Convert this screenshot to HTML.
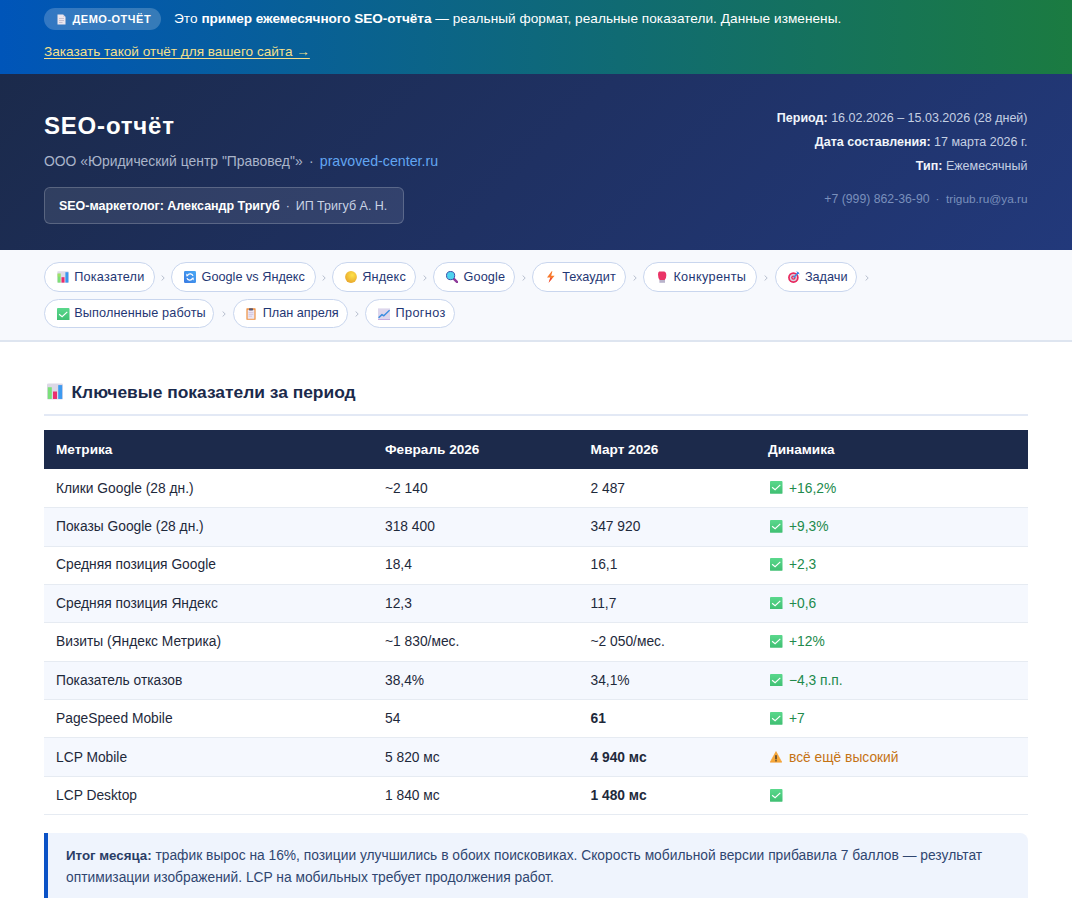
<!DOCTYPE html>
<html lang="ru">
<head>
<meta charset="utf-8">
<style>
*{box-sizing:border-box;margin:0;padding:0}
html,body{width:1072px;height:898px;overflow:hidden;background:#fff}
body{font-family:"Liberation Sans",sans-serif;color:#1e293b;position:relative}
.a{position:absolute;white-space:nowrap}
svg{display:block}
.banner{position:absolute;left:0;top:0;width:1072px;height:74px;background:linear-gradient(90deg,#0055b9 0%,#0e687c 50%,#1b7b41 100%);color:#fff}
.badge{position:absolute;left:44px;top:8px;height:22px;width:117px;border-radius:11px;background:rgba(255,255,255,0.2)}
.badge .t{left:28.5px;top:0;font-size:11px;line-height:22px;font-weight:bold;letter-spacing:0.5px}
.bline{left:174px;top:9.5px;font-size:13.6px;line-height:18px;letter-spacing:0.05px}
.bline b{letter-spacing:-0.04px}
.blink{left:44px;top:42.9px;font-size:13.6px;line-height:18px;color:#f6e08c;text-decoration:underline;text-underline-offset:2px;text-decoration-skip-ink:none}
.header{position:absolute;left:0;top:74px;width:1072px;height:176px;background:linear-gradient(135deg,#1b2a4b 0%,#1f3163 50%,#22397b 100%);color:#fff}
.title{left:44px;top:36.8px;font-size:24px;line-height:30px;font-weight:bold;letter-spacing:0.8px}
.sub{left:44px;top:78.3px;font-size:13.9px;line-height:18px;color:#aab5ca}
.sub .lk{color:#62a6f2;font-size:14.2px}
.mbox{left:44px;top:113px;width:360px;height:37px;border:1px solid rgba(255,255,255,0.2);background:rgba(255,255,255,0.09);border-radius:6px}
.mbox .t{left:14px;top:9.6px;font-size:12.5px;line-height:16px;color:#c9d3e4}
.mbox b{color:#fff;letter-spacing:-0.03px}
.rinfo{right:44.5px;top:31.8px;text-align:right;font-size:12.5px;line-height:24.2px;color:#c5d0e3}
.rinfo b{color:#f1f5fb}
.contacts{right:44.5px;top:116.8px;font-size:11.8px;line-height:16px;color:#7a90bc}
.nav{position:absolute;left:0;top:250px;width:1072px;height:92px;background:#f7f9fd;border-bottom:2px solid #dee5f0}
.pill{position:absolute;height:29.5px;border:1px solid #c9d6ee;background:#fff;border-radius:15px}
.pill svg{position:absolute;left:12px;top:8px}
.pill .t{left:29.2px;top:5.8px;font-size:12.7px;line-height:16px;color:#1f3774}
.sep{position:absolute;width:4px;height:6px}
.stitle{left:71.5px;top:379.9px;font-size:17.4px;line-height:24px;font-weight:bold;color:#1b2a4b}
.sline{position:absolute;left:44px;top:413.5px;width:984px;height:2px;background:#e3e9f5}
.thead{position:absolute;left:44px;top:430px;width:984px;height:38.5px;background:#1c2a4b}
.th{top:11.8px;font-size:13.6px;line-height:16px;font-weight:bold;color:#fff}
.row{position:absolute;left:44px;width:984px;height:38.5px;border-bottom:1px solid #e6ebf2}
.row.alt{background:#f5f8fe}
.td{top:11.6px;font-size:13.8px;line-height:16px;color:#1e293b}
.row.nf .td{top:10.5px}
.c1{left:12px}.c2{left:341px}.c3{left:546.5px}.c4{left:724px}
.ok{color:#218a4c}
.warn{color:#c57314}
.chk{position:absolute;left:726px;top:13px}
.summary{position:absolute;left:44px;top:833px;width:984px;height:80px;background:#eff4fd;border-left:4px solid #0b52c6;border-radius:0 8px 8px 0}
.summary .t{left:18px;top:12.4px;font-size:13.8px;line-height:21.5px;color:#2f4670}
.summary b{color:#2a3d66;font-size:13.3px}
</style>
</head>
<body>
<div class="banner">
  <div class="badge">
    <svg class="a" style="left:12.5px;top:6px" width="9" height="11" viewBox="0 0 9 11"><path d="M0.5 0.5H6L8.5 3V10.5H0.5Z" fill="#ece6ee"/><path d="M6 0.5V3H8.5" fill="#d9d2de"/><path d="M2 4.5H7M2 6.5H7M2 8.5H5.5" stroke="#b8b0c4" stroke-width="0.7"/></svg>
    <div class="a t">ДЕМО-ОТЧЁТ</div>
  </div>
  <div class="a bline">Это <b>пример ежемесячного SEO-отчёта</b> — реальный формат, реальные показатели. Данные изменены.</div>
  <div class="a blink">Заказать такой отчёт для вашего сайта →</div>
</div>
<div class="header">
  <div class="a title">SEO-отчёт</div>
  <div class="a sub">ООО «Юридический центр "Правовед"»<span style="margin:0 6px 0 6.5px">·</span><span class="lk">pravoved-center.ru</span></div>
  <div class="a mbox"><div class="a t"><b>SEO-маркетолог: Александр Тригуб</b><span style="margin:0 5.8px 0 6px">·</span>ИП Тригуб А. Н.</div></div>
  <div class="a rinfo"><b>Период:</b> 16.02.2026 – 15.03.2026 (28 дней)<br><b>Дата составления:</b> 17 марта 2026 г.<br><b>Тип:</b> Ежемесячный</div>
  <div class="a contacts"><span style="font-size:12.25px">+7 (999) 862-36-90</span><span style="margin:0 6.5px 0 6px">·</span>trigub.ru@ya.ru</div>
</div>
<div class="nav">
<div class="pill" style="left:44px;top:12px;width:111.0px"><svg width="12" height="12" viewBox="0 0 12 12" style=""><rect x="0.3" y="0.3" width="11.4" height="11.4" rx="0.8" fill="#dedbe8"/><rect x="0.6" y="2.6" width="3" height="9" fill="#7ddf76"/><rect x="0.6" y="2.6" width="3" height="3" fill="#b8e35a" opacity=".6"/><rect x="4.5" y="6.2" width="3" height="5.4" fill="#ec2a6c"/><rect x="8.4" y="1.2" width="3" height="10.4" fill="#3b97ee"/></svg><div class="a t" style="letter-spacing:0.2px">Показатели</div></div>
<div class="pill" style="left:171.4px;top:12px;width:144.3px"><svg width="12" height="12" viewBox="0 0 12 12" style=""><defs><linearGradient id="sg" x1="1" y1="0" x2="0" y2="1"><stop offset="0" stop-color="#48aaf6"/><stop offset="1" stop-color="#3a7ae2"/></linearGradient></defs><rect x="0" y="0" width="12" height="12" rx="1.2" fill="url(#sg)"/><path d="M3.2 4.6Q4.6 2.6 6.6 2.9Q8.4 3.2 9 4.9" stroke="#fff" stroke-width="1.3" fill="none"/><path d="M2.2 2.6L4.6 4.9L2.4 5.4Z" fill="#fff"/><path d="M8.8 7.4Q7.4 9.4 5.4 9.1Q3.6 8.8 3 7.1" stroke="#fff" stroke-width="1.3" fill="none"/><path d="M9.8 9.4L7.4 7.1L9.6 6.6Z" fill="#fff"/></svg><div class="a t" style="letter-spacing:0px">Google vs Яндекс</div></div>
<div class="pill" style="left:332.1px;top:12px;width:83.5px"><svg width="12" height="12" viewBox="0 0 12 12" style=""><defs><radialGradient id="yg" cx="0.6" cy="0.35" r="0.7"><stop offset="0" stop-color="#fde24a"/><stop offset="1" stop-color="#e8a52a"/></radialGradient></defs><circle cx="6" cy="6" r="5.9" fill="url(#yg)"/></svg><div class="a t" style="letter-spacing:0.17px">Яндекс</div></div>
<div class="pill" style="left:433.2px;top:12px;width:81.7px"><svg width="12" height="12" viewBox="0 0 12 12" style=""><path d="M7.6 7.6L11.3 11.3" stroke="#8e3b9a" stroke-width="2.4" stroke-linecap="round"/><circle cx="4.6" cy="4.6" r="4.1" fill="#4fd3ee" stroke="#3b4fa8" stroke-width="1"/></svg><div class="a t" style="letter-spacing:0.17px">Google</div></div>
<div class="pill" style="left:532px;top:12px;width:94.4px"><svg width="12" height="12" viewBox="0 0 12 12" style=""><path d="M6.7 0.2L2 6.4H5.4L3.6 11.8L9.6 4.8H6.2L7.4 0.2Z" fill="#f7782a"/><path d="M5.4 6.4L3.6 11.8L7.2 7.6Z" fill="#ee3b3b" opacity=".8"/></svg><div class="a t" style="letter-spacing:0.05px">Техаудит</div></div>
<div class="pill" style="left:643.2px;top:12px;width:114.2px"><svg width="12" height="12" viewBox="0 0 12 12" style=""><path d="M3.2 0.4H8.2Q10.4 0.8 10.3 4.5Q10.3 8 8.6 9.2H3.8Q2 7.5 2 3.5Q2 0.6 3.2 0.4Z" fill="#ea3466"/><rect x="3.4" y="9" width="5.6" height="2.8" fill="#b9b3cb"/></svg><div class="a t" style="letter-spacing:0.35px">Конкуренты</div></div>
<div class="pill" style="left:774.7px;top:12px;width:82.6px"><svg width="12" height="12" viewBox="0 0 12 12" style=""><circle cx="5.4" cy="6.6" r="5.3" fill="#e8285e"/><circle cx="5.4" cy="6.6" r="3.6" fill="#d8d3e0"/><circle cx="5.4" cy="6.6" r="2.2" fill="#e8285e"/><circle cx="5.4" cy="6.6" r="0.9" fill="#d8d3e0"/><path d="M5.6 6.4L10 2" stroke="#2f8fe8" stroke-width="1.4"/><path d="M8.2 0.3L9.6 2.4L11.7 3.6L10.6 1.3Z" fill="#3a7ee8"/></svg><div class="a t" style="letter-spacing:0px">Задачи</div></div>
<div class="pill" style="left:44px;top:48.5px;width:170.4px"><svg width="12.5" height="12.8" viewBox="0 0 12.5 12.8" style=""><defs><linearGradient id="cg" x1="0" y1="0" x2="0" y2="1"><stop offset="0" stop-color="#5ad88c"/><stop offset="1" stop-color="#3fbf72"/></linearGradient></defs><rect x="0" y="0" width="12.5" height="12.8" rx="0.9" fill="url(#cg)"/><path d="M2.1 6.3L5.1 8.7L10.3 3.9" stroke="#fff" stroke-width="1.15" fill="none"/></svg><div class="a t" style="letter-spacing:0.12px">Выполненные работы</div></div>
<div class="pill" style="left:232.5px;top:48.5px;width:115.9px"><svg width="12" height="12" viewBox="0 0 12 12" style=""><rect x="0.4" y="0.2" width="9.2" height="11.6" rx="0.6" fill="#ef8f3e"/><rect x="1.6" y="1.8" width="6.8" height="9" fill="#ebe6f3"/><rect x="3" y="0.2" width="4" height="2.2" rx="0.6" fill="#5b5870"/><path d="M2.6 4.6H7.4M2.6 6.4H7.4M2.6 8.2H6" stroke="#c8b8d8" stroke-width="0.7"/></svg><div class="a t" style="letter-spacing:0px">План апреля</div></div>
<div class="pill" style="left:365.4px;top:48.5px;width:89.8px"><svg width="12" height="12" viewBox="0 0 12 12" style=""><rect x="0" y="0.4" width="12" height="11.2" fill="#ddd6ec"/><path d="M0 11.6H12" stroke="#b394d8" stroke-width="0.8"/><path d="M0.6 9.8L4 6.6L5.8 7.8L11.6 2.2" stroke="#3b8ee0" stroke-width="1.5" fill="none" stroke-linejoin="round"/></svg><div class="a t" style="letter-spacing:0.35px">Прогноз</div></div>
<svg class="sep" style="left:161px;top:24.5px" width="4" height="6" viewBox="0 0 4 6"><path d="M0.6 0.5L3.2 3L0.6 5.5" stroke="#b3bccb" stroke-width="0.95" fill="none"/></svg>
<svg class="sep" style="left:321.5px;top:24.5px" width="4" height="6" viewBox="0 0 4 6"><path d="M0.6 0.5L3.2 3L0.6 5.5" stroke="#b3bccb" stroke-width="0.95" fill="none"/></svg>
<svg class="sep" style="left:422.5px;top:24.5px" width="4" height="6" viewBox="0 0 4 6"><path d="M0.6 0.5L3.2 3L0.6 5.5" stroke="#b3bccb" stroke-width="0.95" fill="none"/></svg>
<svg class="sep" style="left:522px;top:24.5px" width="4" height="6" viewBox="0 0 4 6"><path d="M0.6 0.5L3.2 3L0.6 5.5" stroke="#b3bccb" stroke-width="0.95" fill="none"/></svg>
<svg class="sep" style="left:633px;top:24.5px" width="4" height="6" viewBox="0 0 4 6"><path d="M0.6 0.5L3.2 3L0.6 5.5" stroke="#b3bccb" stroke-width="0.95" fill="none"/></svg>
<svg class="sep" style="left:764px;top:24.5px" width="4" height="6" viewBox="0 0 4 6"><path d="M0.6 0.5L3.2 3L0.6 5.5" stroke="#b3bccb" stroke-width="0.95" fill="none"/></svg>
<svg class="sep" style="left:864.5px;top:24.5px" width="4" height="6" viewBox="0 0 4 6"><path d="M0.6 0.5L3.2 3L0.6 5.5" stroke="#b3bccb" stroke-width="0.95" fill="none"/></svg>
<svg class="sep" style="left:221.5px;top:61.0px" width="4" height="6" viewBox="0 0 4 6"><path d="M0.6 0.5L3.2 3L0.6 5.5" stroke="#b3bccb" stroke-width="0.95" fill="none"/></svg>
<svg class="sep" style="left:355px;top:61.0px" width="4" height="6" viewBox="0 0 4 6"><path d="M0.6 0.5L3.2 3L0.6 5.5" stroke="#b3bccb" stroke-width="0.95" fill="none"/></svg>
</div>
<svg class="a" style="left:47px;top:383px" width="16" height="17" viewBox="0 0 12 12"><rect x="0" y="0" width="12" height="12" rx="1" fill="#dcd8e6"/><rect x="0.6" y="2.8" width="3" height="8.8" fill="#7be07a"/><rect x="4.5" y="6" width="3" height="5.6" fill="#ea2f6e"/><rect x="8.4" y="1.2" width="3" height="10.4" fill="#3d9af0"/></svg>
<div class="a stitle">Ключевые показатели за период</div>
<div class="sline"></div>
<div class="thead">
  <div class="a th c1">Метрика</div><div class="a th c2">Февраль 2026</div><div class="a th c3">Март 2026</div><div class="a th c4">Динамика</div>
</div>
<div class="row" style="top:468.50px;height:39.70px"><div class="a td c1" style="top:12.00px">Клики Google (28 дн.)</div><div class="a td c2" style="top:12.00px">~2 140</div><div class="a td c3" style="top:12.00px">2 487</div><svg width="12.5" height="12.8" viewBox="0 0 12.5 12.8" style="position:absolute;left:726px;top:12.8px"><defs><linearGradient id="cg" x1="0" y1="0" x2="0" y2="1"><stop offset="0" stop-color="#5ad88c"/><stop offset="1" stop-color="#3fbf72"/></linearGradient></defs><rect x="0" y="0" width="12.5" height="12.8" rx="0.9" fill="url(#cg)"/><path d="M2.1 6.3L5.1 8.7L10.3 3.9" stroke="#fff" stroke-width="1.15" fill="none"/></svg><div class="a td ok" style="left:745px;top:12.00px">+16,2%</div></div>
<div class="row alt nf" style="top:508.20px;height:38.38px"><div class="a td c1" style="top:10.75px">Показы Google (28 дн.)</div><div class="a td c2" style="top:10.75px">318 400</div><div class="a td c3" style="top:10.75px">347 920</div><svg width="12.5" height="12.8" viewBox="0 0 12.5 12.8" style="position:absolute;left:726px;top:11.55px"><defs><linearGradient id="cg" x1="0" y1="0" x2="0" y2="1"><stop offset="0" stop-color="#5ad88c"/><stop offset="1" stop-color="#3fbf72"/></linearGradient></defs><rect x="0" y="0" width="12.5" height="12.8" rx="0.9" fill="url(#cg)"/><path d="M2.1 6.3L5.1 8.7L10.3 3.9" stroke="#fff" stroke-width="1.15" fill="none"/></svg><div class="a td ok" style="left:745px;top:10.75px">+9,3%</div></div>
<div class="row nf" style="top:546.58px;height:38.38px"><div class="a td c1" style="top:10.82px">Средняя позиция Google</div><div class="a td c2" style="top:10.82px">18,4</div><div class="a td c3" style="top:10.82px">16,1</div><svg width="12.5" height="12.8" viewBox="0 0 12.5 12.8" style="position:absolute;left:726px;top:11.62px"><defs><linearGradient id="cg" x1="0" y1="0" x2="0" y2="1"><stop offset="0" stop-color="#5ad88c"/><stop offset="1" stop-color="#3fbf72"/></linearGradient></defs><rect x="0" y="0" width="12.5" height="12.8" rx="0.9" fill="url(#cg)"/><path d="M2.1 6.3L5.1 8.7L10.3 3.9" stroke="#fff" stroke-width="1.15" fill="none"/></svg><div class="a td ok" style="left:745px;top:10.82px">+2,3</div></div>
<div class="row alt nf" style="top:584.95px;height:38.38px"><div class="a td c1" style="top:10.90px">Средняя позиция Яндекс</div><div class="a td c2" style="top:10.90px">12,3</div><div class="a td c3" style="top:10.90px">11,7</div><svg width="12.5" height="12.8" viewBox="0 0 12.5 12.8" style="position:absolute;left:726px;top:11.7px"><defs><linearGradient id="cg" x1="0" y1="0" x2="0" y2="1"><stop offset="0" stop-color="#5ad88c"/><stop offset="1" stop-color="#3fbf72"/></linearGradient></defs><rect x="0" y="0" width="12.5" height="12.8" rx="0.9" fill="url(#cg)"/><path d="M2.1 6.3L5.1 8.7L10.3 3.9" stroke="#fff" stroke-width="1.15" fill="none"/></svg><div class="a td ok" style="left:745px;top:10.90px">+0,6</div></div>
<div class="row nf" style="top:623.33px;height:38.38px"><div class="a td c1" style="top:10.97px">Визиты (Яндекс Метрика)</div><div class="a td c2" style="top:10.97px">~1 830/мес.</div><div class="a td c3" style="top:10.97px">~2 050/мес.</div><svg width="12.5" height="12.8" viewBox="0 0 12.5 12.8" style="position:absolute;left:726px;top:11.77px"><defs><linearGradient id="cg" x1="0" y1="0" x2="0" y2="1"><stop offset="0" stop-color="#5ad88c"/><stop offset="1" stop-color="#3fbf72"/></linearGradient></defs><rect x="0" y="0" width="12.5" height="12.8" rx="0.9" fill="url(#cg)"/><path d="M2.1 6.3L5.1 8.7L10.3 3.9" stroke="#fff" stroke-width="1.15" fill="none"/></svg><div class="a td ok" style="left:745px;top:10.97px">+12%</div></div>
<div class="row alt nf" style="top:661.70px;height:38.38px"><div class="a td c1" style="top:11.05px">Показатель отказов</div><div class="a td c2" style="top:11.05px">38,4%</div><div class="a td c3" style="top:11.05px">34,1%</div><svg width="12.5" height="12.8" viewBox="0 0 12.5 12.8" style="position:absolute;left:726px;top:11.85px"><defs><linearGradient id="cg" x1="0" y1="0" x2="0" y2="1"><stop offset="0" stop-color="#5ad88c"/><stop offset="1" stop-color="#3fbf72"/></linearGradient></defs><rect x="0" y="0" width="12.5" height="12.8" rx="0.9" fill="url(#cg)"/><path d="M2.1 6.3L5.1 8.7L10.3 3.9" stroke="#fff" stroke-width="1.15" fill="none"/></svg><div class="a td ok" style="left:745px;top:11.05px">−4,3 п.п.</div></div>
<div class="row nf" style="top:700.08px;height:38.38px"><div class="a td c1" style="top:11.12px">PageSpeed Mobile</div><div class="a td c2" style="top:11.12px">54</div><div class="a td c3" style="top:11.12px"><b>61</b></div><svg width="12.5" height="12.8" viewBox="0 0 12.5 12.8" style="position:absolute;left:726px;top:11.92px"><defs><linearGradient id="cg" x1="0" y1="0" x2="0" y2="1"><stop offset="0" stop-color="#5ad88c"/><stop offset="1" stop-color="#3fbf72"/></linearGradient></defs><rect x="0" y="0" width="12.5" height="12.8" rx="0.9" fill="url(#cg)"/><path d="M2.1 6.3L5.1 8.7L10.3 3.9" stroke="#fff" stroke-width="1.15" fill="none"/></svg><div class="a td ok" style="left:745px;top:11.12px">+7</div></div>
<div class="row alt nf" style="top:738.45px;height:38.38px"><div class="a td c1" style="top:11.20px">LCP Mobile</div><div class="a td c2" style="top:11.20px">5 820 мс</div><div class="a td c3" style="top:11.20px"><b>4 940 мс</b></div><svg width="12" height="12" viewBox="0 0 12 12" style="position:absolute;left:726px;top:12.4px"><path d="M6 0.6L11.8 11.2H0.2Z" fill="#f7a93a" stroke="#f39a2a" stroke-width="0.6" stroke-linejoin="round"/><rect x="5.3" y="4.2" width="1.4" height="4.2" fill="#3a3230"/><rect x="5.3" y="9.2" width="1.4" height="1.2" fill="#3a3230"/></svg><div class="a td warn" style="left:745px;top:11.20px">всё ещё высокий</div></div>
<div class="row nf" style="top:776.83px;height:38.38px"><div class="a td c1" style="top:11.27px">LCP Desktop</div><div class="a td c2" style="top:11.27px">1 840 мс</div><div class="a td c3" style="top:11.27px"><b>1 480 мс</b></div><svg width="12.5" height="12.8" viewBox="0 0 12.5 12.8" style="position:absolute;left:726px;top:12.07px"><defs><linearGradient id="cg" x1="0" y1="0" x2="0" y2="1"><stop offset="0" stop-color="#5ad88c"/><stop offset="1" stop-color="#3fbf72"/></linearGradient></defs><rect x="0" y="0" width="12.5" height="12.8" rx="0.9" fill="url(#cg)"/><path d="M2.1 6.3L5.1 8.7L10.3 3.9" stroke="#fff" stroke-width="1.15" fill="none"/></svg><div class="a td ok" style="left:745px;top:11.27px"></div></div>
<div class="summary"><div class="a t"><b>Итог месяца:</b> трафик вырос на 16%, позиции улучшились в обоих поисковиках. Скорость мобильной версии прибавила 7 баллов — результат<br>оптимизации изображений. LCP на мобильных требует продолжения работ.</div></div>
</body>
</html>
